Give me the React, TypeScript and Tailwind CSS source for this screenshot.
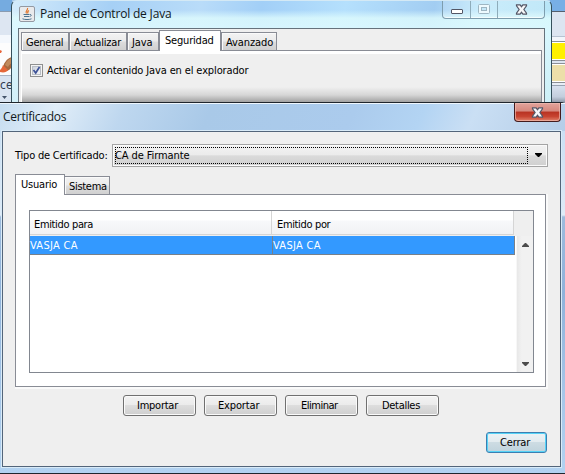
import React from 'react';

const glass = 'bg-[linear-gradient(100deg,#d4ebfb_0%,#a6d0f5_18%,#b9dcf9_34%,#a2cff7_45%,#b5e0fd_60%,#a2cdf2_76%,#c2e9fb_84%,#b5e4f6_100%)]';

function CloseX() {
  return (
    <svg width="13" height="11" viewBox="0 0 13 11" className="block">
      <path d="M1.500 .8h3.600l1.400 1.900L7.900.8h3.600v1L8.900 5.500l2.600 3.700v1H7.900L6.500 8.300 5.100 10.200H1.500v-1l2.600-3.700L1.500 1.800z" fill="#f6f6f8" stroke="#535666" strokeWidth="1.200" />
    </svg>
  );
}

function Tab({ label, box, text }: { label: string; box: string; text: string }) {
  return (
    <div className={`box-border border border-b-0 border-[#898c95] flex ${box}`}>
      <span className={`whitespace-nowrap leading-[15px] ${text}`}>{label}</span>
    </div>
  );
}

const idle = 'h-[18px] pl-[4px] bg-[linear-gradient(#f3f3f3_0%,#ebebeb_48%,#dddddd_52%,#d0d0d0_100%)] shadow-[inset_1px_1px_0_#fafafa]';

function Button({ label, text }: { label: string; text: string }) {
  return (
    <button className="w-[73px] h-[21px] rounded-[3px] border border-[#707070] bg-[linear-gradient(#f3f3f3_0%,#ebebeb_48%,#dddddd_50%,#cfcfcf_100%)] shadow-[inset_0_0_0_1px_#fafafa] flex items-start">
      <span className={`leading-[20px] whitespace-nowrap ${text}`}>{label}</span>
    </button>
  );
}

function Desktop() {
  return (
    <>
      <div className="absolute left-0 top-0 w-3 h-[104px] flex flex-col bg-[#d9e4f1]">
        <div className="h-[11px] bg-[#75abe0]" />
        <div className="h-6 border-t border-[#8a9bb0] bg-[#dde6f2]" />
        <div className="h-2 bg-[#f4f8fd]" />
        <svg width="12" height="32" viewBox="0 0 12 32" className="block bg-[#fdfdfd]">
          <path d="M0 7l2 1-1 2H0z" fill="#e8653a" />
          <path d="M12 14C8 15 4 19 3 24l4 4c3-1 4-3 5-5z" fill="#a8693f" />
          <path d="M12 15C8 16 6 19 5 22l3 2c1-2 2-3 4-4z" fill="#c08a5c" />
          <path d="M3 22C2 25 1 26 0 27v2c4 1 7 0 8-2z" fill="#e5683a" />
        </svg>
        <div className="h-[18px] border-t border-[#a9b6c6] text-[12px] leading-[19px] text-[#303c50]">ce</div>
        <svg width="12" height="11" viewBox="0 0 12 11" className="block"><path d="M2 3h5L4.500 6z" fill="#44546a" /></svg>
      </div>
      <div className="absolute left-[550px] top-0 w-[15px] h-[104px] flex flex-col bg-[#d5dfec]">
        <div className="h-[11px] bg-[#78afe6]" />
        <div className="h-[25px] border-t border-[#55606e] bg-[#dce5f1]" />
        <div className="h-[5px] bg-[#f2f6fb] border-t border-[#b7c3d2]" />
        <div className="h-5 bg-[#fff000] border-y border-[#8b8f96] shadow-[inset_0_1px_#fff,inset_0_-1px_#fff]" />
        <div className="h-[2px] bg-[#dce5f1]" />
        <div className="h-[20px] bg-[#ecdfa9] border-y border-[#8b8f96] shadow-[inset_0_1px_#fff,inset_0_-1px_#fff]" />
        <div className="h-[3px] bg-[#e8eef6] border-b border-[#98a3b2]" />
        <div className="flex-1 bg-[linear-gradient(#d8e1ee,#c3cedd_60%,#7d8897)]" />
      </div>
    </>
  );
}

function JavaPanel() {
  return (
    <div className={`absolute left-[11px] top-0 w-[541px] h-[104px] rounded-t-[6px] border-x border-t border-x-[#35505c] border-t-[#d4e9f5] overflow-hidden ${glass}`}>
      <div className="h-full px-[6px] flex flex-col bg-[linear-gradient(#ffffff00_0px,#ffffff00_9px,#dffcfdcc_17px,#defaffdd_28px,#d5f3f7bb_100%)]">
        <div className="h-[27px] flex items-start">
          <svg width="16" height="16" viewBox="0 0 16 16" className="mt-[5px] ml-[1px] shrink-0">
            <rect x=".5" y=".5" width="15" height="15" rx="1.500" fill="#e9eaec" stroke="#9499a2" />
            <path d="M8.500 2c1 2-3 3-1 5.500M10 4.500c-2 1-1.500 2-1 3" fill="none" stroke="#e2762c" strokeWidth="1.200" />
            <path d="M4.500 8.500h6M5 10.500h5M3.500 12.800c2 1 7 1 9 0M11 8.500c2 0 1.500 1.800-.5 2" fill="none" stroke="#4d7390" />
          </svg>
          <span className="ml-[5px] mt-[4px] leading-[18px] text-[12px] font-['Open_Sans',sans-serif] tracking-[-0.18px] text-[#101820] whitespace-nowrap">Panel de Control de Java</span>
          <div className="ml-auto w-[103px] h-[18px] flex rounded-b-[4px] border border-t-0 border-[#7e9dae] shadow-[inset_0_-1px_#ffffffaa] bg-[#ffffff22]">
            <div className="w-[28px] border-r border-[#8eacba] flex justify-center pt-[8px]">
              <div className="w-[12px] h-[5px] rounded-[1px] border border-[#535666] bg-white" />
            </div>
            <div className="w-[27px] border-r border-[#8eacba] flex justify-center pt-[3px]">
              <svg width="12" height="10" viewBox="0 0 12 10"><rect x=".5" y=".5" width="11" height="9" rx="1" fill="#eefafe" stroke="#9fb6c2" /><rect x="3.500" y="3.500" width="5" height="3" fill="#c5e8f8" stroke="#9fb6c2" /></svg>
            </div>
            <div className="flex-1 flex justify-center pt-[3px]"><CloseX /></div>
          </div>
        </div>
        <div className="h-[76px] border border-b-0 border-[#66727c] bg-[#efefef] px-[2px] pt-[1px] flex flex-col">
          <div className="h-[20px] flex items-end">
            <Tab label="General" box={`w-[48px] ${idle}`} text="pt-[2px] tracking-[-0.25px]" />
            <Tab label="Actualizar" box={`w-[58px] ${idle}`} text="pt-[2px] tracking-[-0.2px]" />
            <Tab label="Java" box={`w-[32px] ${idle}`} text="pt-[2px] tracking-[-0.1px]" />
            <Tab label="Seguridad" box="w-[62px] h-[21px] pl-[5px] -mb-[1px] bg-white relative" text="pt-[2px] tracking-[-0.2px]" />
            <Tab label="Avanzado" box={`w-[56px] ${idle}`} text="pt-[2px] tracking-[-0.1px]" />
          </div>
          <div className="flex-1 border border-b-0 border-l-white border-[#898c95] shadow-[inset_0_3px_#fff] bg-[linear-gradient(#efefef_0px,#efefef_36px,#d6d6d6_44px,#929292_53px)] pt-[13px] pl-[8px] flex items-start">
            <div className="w-[13px] h-[13px] border border-[#8e8f8f] bg-[#f4f4f4] p-[1px] shrink-0">
              <div className="w-[9px] h-[9px] border border-[#b8bdc5] bg-[linear-gradient(135deg,#ccd2dc,#f4f5f7)]">
                <svg width="9" height="9" viewBox="0 0 9 9" className="-m-[1px]"><path d="M1.500 4L3.700 7 7.500 1" fill="none" stroke="#3c5197" strokeWidth="1.700" /></svg>
              </div>
            </div>
            <span className="ml-[4px] -mt-[1px] leading-[16px] whitespace-nowrap tracking-[-0.13px]">Activar el contenido Java en el explorador</span>
          </div>
        </div>
      </div>
    </div>
  );
}

function Certificates() {
  return (
    <div className="absolute left-0 top-[102px] w-[565px] h-[372px] rounded-tr-[4px] border-y border-[#20262d] bg-[linear-gradient(#c4dcf3_0px,#dce9f6_105px,#e2edf8_112px,#9dbbdd_114px,#8fb2da_190px,#a6c6e8_290px,#b2d2f1_100%)] flex flex-col">
      <div className="h-[28px] pl-[3px] pr-[4px] flex justify-between bg-[linear-gradient(115deg,#c5dcf0_0%,#e0edf8_10%,#bed7ef_22%,#a9c9e8_37%,#abcbed_62%,#b3d4f3_74%,#cadff4_83%,#b4cde8_100%)] shadow-[inset_0_1px_#eef6fd]">
        <span className="pt-[5px] leading-[18px] text-[12px] font-['Open_Sans',sans-serif] text-[#111820] tracking-[-0.25px]">Certificados</span>
        <div className="w-[47px] h-[19px] rounded-b-[4px] border border-t-0 border-[#431b1d] bg-[linear-gradient(#e2a49c_0%,#d5887d_45%,#b83222_50%,#c74431_75%,#e0826b_100%)] shadow-[inset_0_0_0_1px_#f0bdb3aa] flex justify-center pt-[4px]"><CloseX /></div>
      </div>
      <div className="ml-[2px] w-[559px] h-[336px] border border-[#53657a] shadow-[0_0_0_1px_#d9ebf8] bg-[#efefef] pl-[12px] pr-[12px] pt-[12px] flex flex-col">
        <div className="h-[22px] flex items-center">
          <span className="w-[97px] shrink-0 pt-[2px] leading-[16px] whitespace-nowrap tracking-[-0.2px]">Tipo de Certificado:</span>
          <div className="w-[436px] h-[23px] shrink-0 border border-[#a4a4a4] bg-[linear-gradient(#f2f2f2_0%,#ebebeb_48%,#dadada_51%,#d0d0d0_100%)] shadow-[inset_0_0_0_1px_#fafafa] p-[2px] flex items-center">
            <div className="w-[413px] h-[17px] border border-dotted border-black leading-[16px] whitespace-nowrap tracking-[-0.1px]"><span className="-ml-[1px]">CA de Firmante</span></div>
            <svg width="7" height="4" viewBox="0 0 7 4" className="ml-[7px]"><path d="M0 0h7v1L4 4H3L0 1z" /></svg>
          </div>
        </div>
        <div className="mt-[8px] h-[20px] flex items-end">
          <Tab label="Usuario" box="w-[50px] h-[21px] pl-[5px] -mb-[1px] bg-white relative" text="pt-[2px] tracking-[-0.2px]" />
          <Tab label="Sistema" box={`w-[45px] ${idle} border-l-0`} text="pt-[2px] tracking-[-0.3px]" />
        </div>
        <div className="w-[531px] h-[193px] border border-[#898c95] bg-white shadow-[1px_1px_0_1px_#fafafa] p-[13px] pt-[15px]">
          <div className="w-[505px] h-[163px] border border-[#828790] bg-white flex flex-col">
            <div className="h-[25px] flex bg-[#efefef]">
              <div className="w-[242px] h-[24px] border-r border-b border-[#d5d5d5] bg-[linear-gradient(#fff_0px,#fff_9px,#f7f8fa_10px,#f1f2f4_100%)] pl-[4px] pt-[6px] leading-[16px] tracking-[-0.35px]">Emitido para</div>
              <div className="w-[242px] h-[24px] border-r border-b border-[#d5d5d5] bg-[linear-gradient(#fff_0px,#fff_9px,#f7f8fa_10px,#f1f2f4_100%)] pl-[5px] pt-[6px] leading-[16px] tracking-[-0.35px]">Emitido por</div>
            </div>
            <div className="flex-1 flex">
              <div className="w-[486px]">
                <div className="w-[485px] h-[19px] flex bg-[#3399ff] text-white border-b border-r border-[#77808a] leading-[19px]">
                  <div className="w-[243px] border-r border-[#77808a] tracking-[0.3px]">VASJA CA</div>
                  <div className="tracking-[0.3px]">VASJA CA</div>
                </div>
              </div>
              <div className="flex-1 bg-[linear-gradient(90deg,#e8e8e8,#f1f1f1_30%,#f1f1f1)] border-l border-[#f7f7f7] flex flex-col items-center justify-between pt-[7px] pb-[6px]">
                <svg width="7" height="4" viewBox="0 0 7 4"><path d="M3 0h1l3 3v1H0V3z" fill="#4c4c4c" /></svg>
                <svg width="7" height="4" viewBox="0 0 7 4"><path d="M0 0h7v1L4 4H3L0 1z" fill="#4c4c4c" /></svg>
              </div>
            </div>
          </div>
        </div>
        <div className="mt-[8px] ml-[108px] flex gap-[8px]">
          <Button label="Importar" text="pl-[13px] tracking-[-0.25px]" />
          <Button label="Exportar" text="pl-[13px] tracking-[-0.15px]" />
          <Button label="Eliminar" text="pl-[15px] tracking-[-0.5px]" />
          <Button label="Detalles" text="pl-[15px] tracking-[-0.3px]" />
        </div>
        <button className="mt-[16px] ml-[471px] w-[61px] h-[21px] rounded-[3px] border border-[#3c7fb1] bg-[linear-gradient(#edf2f5_0%,#e2ebef_48%,#cddce3_50%,#c0d3dc_100%)] shadow-[inset_0_0_0_1px_#56d3f7] flex items-start pl-[13px] shrink-0">
          <span className="leading-[20px] tracking-[-0.15px]">Cerrar</span>
        </button>
      </div>
    </div>
  );
}

export default function App() {
  return (
    <div className="relative w-[565px] h-[474px] overflow-hidden bg-[#a9c9e9] text-black text-[11px] font-['DejaVu_Sans_Condensed','DejaVu_Sans',sans-serif]">
      <Desktop />
      <JavaPanel />
      <Certificates />
    </div>
  );
}
